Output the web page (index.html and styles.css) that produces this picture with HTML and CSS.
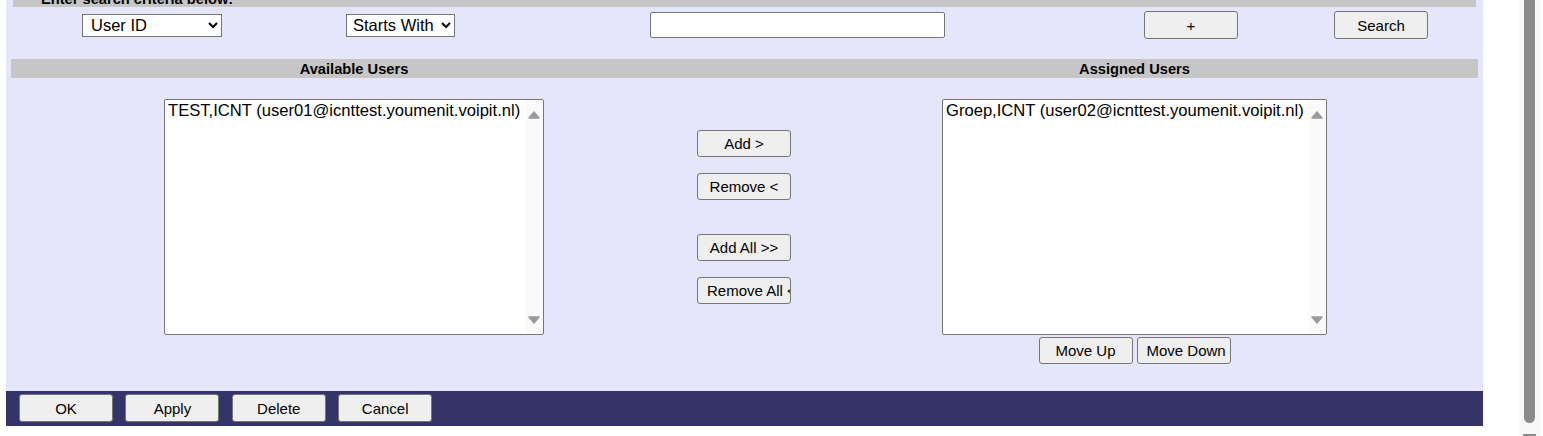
FILE: index.html
```html
<!DOCTYPE html>
<html>
<head>
<meta charset="utf-8">
<title>Users</title>
<link rel="stylesheet" href="styles.css">
</head>
<body>
<div class="page">
  <div class="panel">
    <div class="crit-bar"><div class="crit-text">Enter search criteria below:</div></div>
    <div class="search-row">
      <div class="cell"><select class="sel sel-field"><option>User ID</option></select></div>
      <div class="cell"><select class="sel sel-mode"><option>Starts With</option></select></div>
      <div class="cell"><input class="txt" type="text"></div>
      <div class="cell"><button class="btn">+</button></div>
      <div class="cell"><button class="btn">Search</button></div>
    </div>
    <div class="col-bar">
      <div class="col-title">Available Users</div>
      <div></div>
      <div class="col-title">Assigned Users</div>
    </div>
    <div class="lists">
      <div class="col col-left">
        <div class="listbox lb-left">
          <div class="lb-items"><div class="lb-item">TEST,ICNT (user01@icnttest.youmenit.voipit.nl)</div></div>
          <div class="lb-scroll">
            <svg class="arrow" width="12" height="8" viewBox="0 0 12 8"><polygon points="6,1 11,7 1,7" fill="#9a9a9a" stroke="#9a9a9a" stroke-width="1.4" stroke-linejoin="round"/></svg>
            <svg class="arrow" width="12" height="8" viewBox="0 0 12 8"><polygon points="1,1 11,1 6,7" fill="#9a9a9a" stroke="#9a9a9a" stroke-width="1.4" stroke-linejoin="round"/></svg>
          </div>
        </div>
      </div>
      <div class="col col-mid">
        <button class="btn btn-s">Add &gt;</button>
        <button class="btn btn-s gap-s">Remove &lt;</button>
        <button class="btn btn-s gap-l">Add All &gt;&gt;</button>
        <button class="btn btn-s gap-s">Remove All &lt;&lt;</button>
      </div>
      <div class="col col-right">
        <div class="listbox lb-right">
          <div class="lb-items"><div class="lb-item">Groep,ICNT (user02@icnttest.youmenit.voipit.nl)</div></div>
          <div class="lb-scroll">
            <svg class="arrow" width="12" height="8" viewBox="0 0 12 8"><polygon points="6,1 11,7 1,7" fill="#9a9a9a" stroke="#9a9a9a" stroke-width="1.4" stroke-linejoin="round"/></svg>
            <svg class="arrow" width="12" height="8" viewBox="0 0 12 8"><polygon points="1,1 11,1 6,7" fill="#9a9a9a" stroke="#9a9a9a" stroke-width="1.4" stroke-linejoin="round"/></svg>
          </div>
        </div>
        <div class="move-row">
          <button class="btn btn-s">Move Up</button>
          <button class="btn btn-s">Move Down</button>
        </div>
      </div>
    </div>
  </div>
  <div class="footer">
    <button class="btn">OK</button>
    <button class="btn">Apply</button>
    <button class="btn">Delete</button>
    <button class="btn">Cancel</button>
  </div>
</div>
<div class="vscroll"><div class="vthumb"></div><div class="varrow"></div></div>
</body>
</html>
```
FILE: styles.css
```css
html, body {
  margin: 0;
  padding: 0;
  background: #ffffff;
  overflow: hidden;
}
body {
  font-family: "Liberation Sans", Arial, sans-serif;
  color: #000;
}
.page {
  width: 1477px;
  margin-left: 6px;
}
.panel {
  background: #e6e6fa;
}
.crit-bar {
  margin: 0 7px;
  height: 7px;
  overflow: hidden;
  background: #c6c6c6;
}
.crit-text {
  margin-top: -11px;
  padding-left: 28px;
  line-height: 20px;
  font-size: 14.67px;
  font-weight: bold;
}
.search-row {
  display: grid;
  grid-template-columns: 292px 205px 589px 198px 182px;
  align-items: start;
  height: 52px;
  padding-top: 4px;
  box-sizing: border-box;
}
.cell {
  height: 28px;
  display: flex;
  align-items: center;
  justify-content: center;
}
.sel {
  height: 23px;
  font-family: "Liberation Sans", Arial, sans-serif;
  font-size: 16.5px;
  color: #000;
  background: #fff;
  border: 1px solid #767676;
  border-radius: 0;
  padding: 0 0 0 4px;
  margin: 0;
  box-sizing: border-box;
}
.sel-field { width: 140px; }
.sel-mode { width: 109px; padding-left: 2px; }
.txt {
  width: 295px;
  height: 26px;
  box-sizing: border-box;
  border: 1px solid #767676;
  border-radius: 2px;
  background: #fff;
  margin: 0;
  padding: 0 3px;
  font-family: "Liberation Sans", Arial, sans-serif;
  font-size: 15px;
}
.btn {
  width: 94px;
  height: 28px;
  box-sizing: border-box;
  margin: 0;
  padding: 0 9px;
  background: #efefef;
  border: 1px solid #767676;
  border-radius: 3px;
  font-family: "Liberation Sans", Arial, sans-serif;
  font-size: 15px;
  color: #000;
  white-space: nowrap;
  overflow: hidden;
  text-align: center;
}
.btn-s { height: 27px; }
.col-bar {
  margin: 0 5px;
  height: 19px;
  background: #c6c6c6;
  display: grid;
  grid-template-columns: 686px 94px 1fr;
  font-size: 14.67px;
  font-weight: bold;
  line-height: 20px;
  text-align: center;
}
.lists {
  margin: 0 5px;
  height: 313px;
  display: grid;
  grid-template-columns: 686px 94px 1fr;
  align-items: start;
}
.col-left {
  padding-top: 21px;
  display: flex;
  justify-content: center;
}
.col-mid {
  padding-top: 52px;
  display: flex;
  flex-direction: column;
}
.gap-s { margin-top: 16px; }
.gap-l { margin-top: 34px; }
.col-right {
  padding-top: 21px;
  display: flex;
  flex-direction: column;
  align-items: center;
}
.listbox {
  display: flex;
  height: 236px;
  box-sizing: border-box;
  border: 1px solid #767676;
  border-radius: 2px;
  background: #fff;
  overflow: hidden;
}
.lb-left { width: 380px; }
.lb-right { width: 385px; }
.lb-items {
  flex: 1;
  min-width: 0;
  padding: 1px 3px 0;
  font-size: 16.6px;
  line-height: 19px;
  white-space: nowrap;
}
.lb-scroll {
  width: 18px;
  flex: none;
  background: #fafafa;
  display: flex;
  flex-direction: column;
  justify-content: space-between;
  align-items: center;
  padding: 11px 0 10px;
  box-sizing: border-box;
}
.arrow { display: block; }
.move-row {
  margin-top: 2px;
  display: flex;
  gap: 4px;
}
.footer {
  height: 35px;
  box-sizing: border-box;
  background: #353468;
  display: flex;
  gap: 12.4px;
  padding: 3px 13px 0;
}
.vscroll {
  position: fixed;
  top: 0;
  left: 1519px;
  width: 22px;
  height: 436px;
  background: #f8f8f8;
}
.vthumb {
  margin-left: 5px;
  width: 11px;
  height: 423px;
  background: #8a8a8a;
  border-radius: 0 0 6px 6px;
}
.varrow {
  margin: 11px 0 0 4px;
  width: 13px;
  height: 2px;
  background: #8a8a8a;
}
```
